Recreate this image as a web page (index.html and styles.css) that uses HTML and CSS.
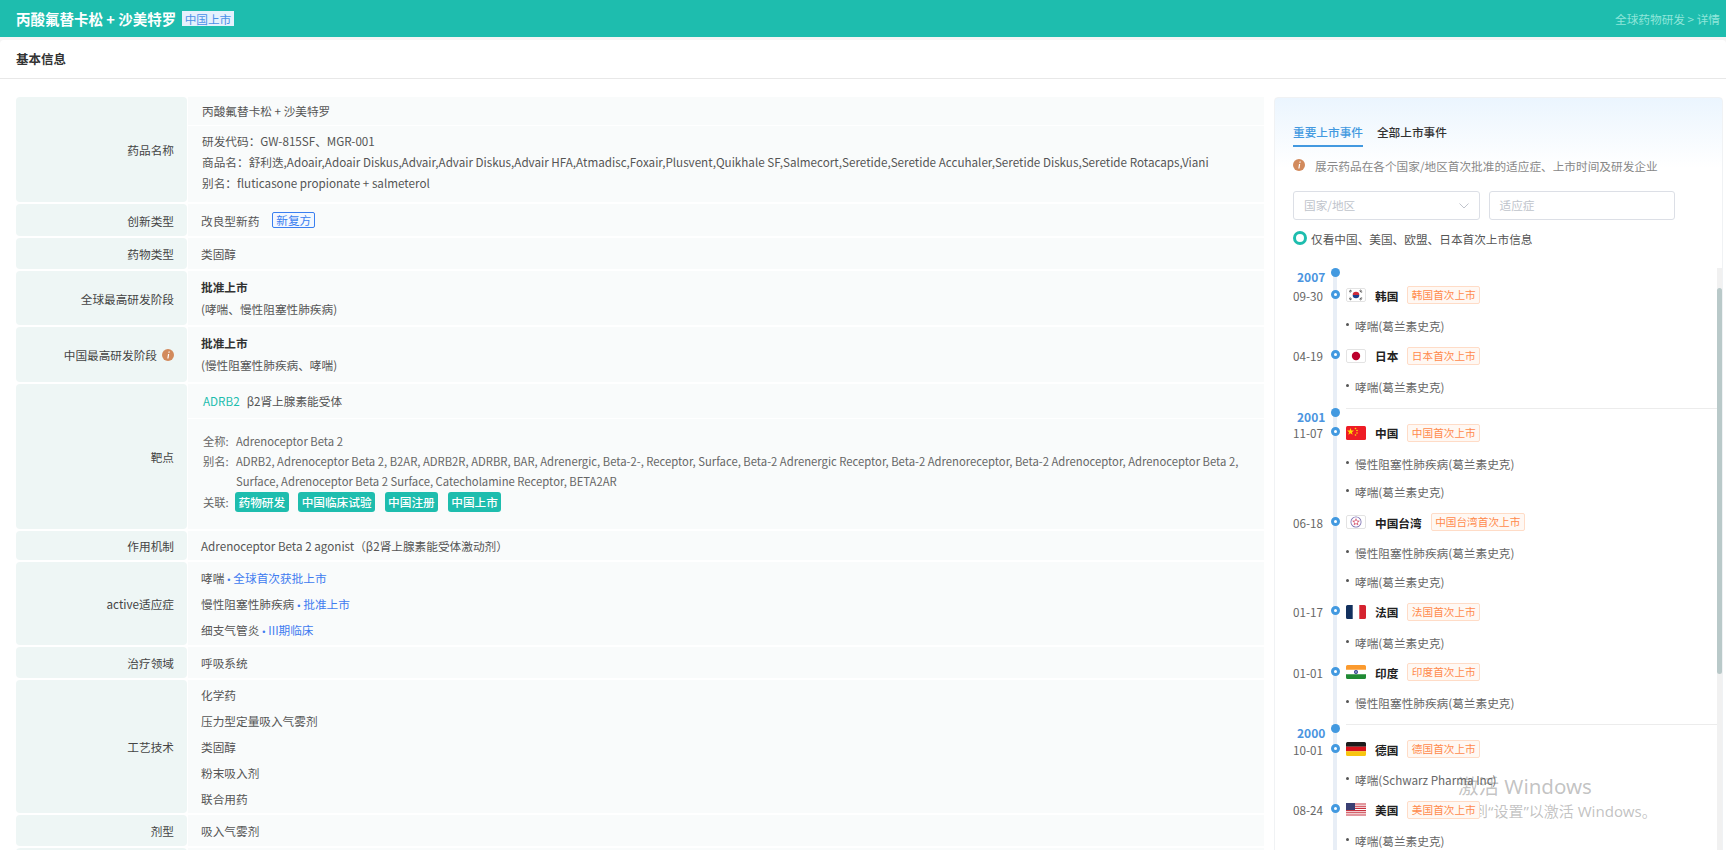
FILE: index.html
```html
<!DOCTYPE html>
<html lang="zh-CN">
<head>
<meta charset="utf-8">
<title>丙酸氟替卡松 + 沙美特罗</title>
<link rel="stylesheet" href="styles.css">
</head>
<body>
<header class="topbar">
  <div class="topbar-left">
    <h1 class="drug-title">丙酸氟替卡松 + 沙美特罗</h1>
    <span class="status-tag">中国上市</span>
  </div>
  <div class="crumb">全球药物研发 &gt; 详情</div>
</header>
<main class="card">
  <div class="card-head">基本信息</div>
  <div class="card-body">
    <section class="info-table">
      <div class="row">
        <div class="label">药品名称</div>
        <div class="value stacked">
          <div class="sub name-main">丙酸氟替卡松 + 沙美特罗</div>
          <div class="sub name-list">
            <div>研发代码：GW-815SF、MGR-001</div>
            <div>商品名：舒利迭,Adoair,Adoair Diskus,Advair,Advair Diskus,Advair HFA,Atmadisc,Foxair,Plusvent,Quikhale SF,Salmecort,Seretide,Seretide Accuhaler,Seretide Diskus,Seretide Rotacaps,Viani</div>
            <div>别名：fluticasone propionate + salmeterol</div>
          </div>
        </div>
      </div>
      <div class="row">
        <div class="label">创新类型</div>
        <div class="value single tagged">改良型新药<span class="outline-tag">新复方</span></div>
      </div>
      <div class="row">
        <div class="label">药物类型</div>
        <div class="value single">类固醇</div>
      </div>
      <div class="row">
        <div class="label">全球最高研发阶段</div>
        <div class="value two-line"><div class="strong">批准上市</div><div>(哮喘、慢性阻塞性肺疾病)</div></div>
      </div>
      <div class="row">
        <div class="label">中国最高研发阶段<svg class="info-icon label-icon" viewBox="0 0 12 12"><circle cx="6" cy="6" r="6" fill="#d28a5c"/><path d="M6.6 2.4h1.2l-.3 1.3H6.300zM6 4.900h1.200L6.500 9.600H5.300z" fill="#fff"/></svg></div>
        <div class="value two-line second"><div class="strong">批准上市</div><div>(慢性阻塞性肺疾病、哮喘)</div></div>
      </div>
      <div class="row">
        <div class="label">靶点</div>
        <div class="value stacked">
          <div class="sub target-main"><span class="target-link">ADRB2</span><span>β2肾上腺素能受体</span></div>
          <div class="sub target-detail">
            <div class="kv"><span class="k">全称:</span><span class="v">Adrenoceptor Beta 2</span></div>
            <div class="kv"><span class="k">别名:</span><span class="v">ADRB2, Adrenoceptor Beta 2, B2AR, ADRB2R, ADRBR, BAR, Adrenergic, Beta-2-, Receptor, Surface, Beta-2 Adrenergic Receptor, Beta-2 Adrenoreceptor, Beta-2 Adrenoceptor, Adrenoceptor Beta 2, Surface, Adrenoceptor Beta 2 Surface, Catecholamine Receptor, BETA2AR</span></div>
            <div class="kv"><span class="k">关联:</span><span class="v chips"><span class="chip">药物研发</span><span class="chip">中国临床试验</span><span class="chip">中国注册</span><span class="chip">中国上市</span></span></div>
          </div>
        </div>
      </div>
      <div class="row">
        <div class="label">作用机制</div>
        <div class="value slim">Adrenoceptor Beta 2 agonist（β2肾上腺素能受体激动剂）</div>
      </div>
      <div class="row">
        <div class="label">active适应症</div>
        <div class="value multi">
          <div>哮喘<span class="sep">•</span><span class="link">全球首次获批上市</span></div>
          <div>慢性阻塞性肺疾病<span class="sep">•</span><span class="link">批准上市</span></div>
          <div>细支气管炎<span class="sep">•</span><span class="link">III期临床</span></div>
        </div>
      </div>
      <div class="row">
        <div class="label">治疗领域</div>
        <div class="value single">呼吸系统</div>
      </div>
      <div class="row">
        <div class="label">工艺技术</div>
        <div class="value multi tight">
          <div>化学药</div>
          <div>压力型定量吸入气雾剂</div>
          <div>类固醇</div>
          <div>粉末吸入剂</div>
          <div>联合用药</div>
        </div>
      </div>
      <div class="row">
        <div class="label">剂型</div>
        <div class="value single">吸入气雾剂</div>
      </div>
      <div class="row">
        <div class="label">&nbsp;</div>
        <div class="value single">&nbsp;</div>
      </div>
    </section>

    <aside class="events">
      <div class="tabs">
        <span class="tab active">重要上市事件</span>
        <span class="tab">全部上市事件</span>
      </div>
      <div class="note"><svg class="info-icon" viewBox="0 0 12 12"><circle cx="6" cy="6" r="6" fill="#d28a5c"/><path d="M6.600 2.400h1.200l-.3 1.300H6.300zM6 4.900h1.200L6.500 9.600H5.300z" fill="#fff"/></svg><span>展示药品在各个国家/地区首次批准的适应症、上市时间及研发企业</span></div>
      <div class="filters">
        <div class="field">国家/地区<svg class="chevron" viewBox="0 0 10 6"><path d="M.5.500 5 5 9.500.500" fill="none" stroke="#c0c4cc" stroke-width="1"/></svg></div>
        <div class="field">适应症</div>
      </div>
      <label class="only"><span class="radio"></span>仅看中国、美国、欧盟、日本首次上市信息</label>

      <div class="timeline">
        <div class="group">
          <div class="year"><span class="year-text">2007</span><span class="year-dot"></span></div>
          <div class="event">
            <span class="date">09-30</span><span class="dot"></span>
            <svg class="flag" viewBox="0 0 20 14"><rect x=".5" y=".5" width="19" height="13" rx="1.500" fill="#fff" stroke="#e3e3e3"/><path d="M6.700 7a3.300 3.300 0 0 1 6.600 0z" fill="#cf2a3a"/><path d="M6.700 7a3.300 3.300 0 0 0 6.600 0z" fill="#1d3f8c"/><path d="M3 3.600l2-1.700M3.800 4.500l2-1.700M14.200 1.900l2 1.700M13.500 2.800l2 1.700M3 10.400l2 1.700M3.800 9.500l2 1.700M14.200 12.100l2-1.700M13.500 11.200l2-1.700" stroke="#222" stroke-width=".8"/></svg>
            <span class="country">韩国</span><span class="first-tag">韩国首次上市</span>
          </div>
          <div class="bullet">哮喘(葛兰素史克)</div>
          <div class="event">
            <span class="date">04-19</span><span class="dot"></span>
            <svg class="flag" viewBox="0 0 20 14"><rect x=".5" y=".5" width="19" height="13" rx="1.500" fill="#fff" stroke="#e3e3e3"/><circle cx="10" cy="7" r="4.200" fill="#bc002d"/></svg>
            <span class="country">日本</span><span class="first-tag">日本首次上市</span>
          </div>
          <div class="bullet">哮喘(葛兰素史克)</div>
        </div>

        <div class="group ruled">
          <div class="year"><span class="year-text">2001</span><span class="year-dot"></span></div>
          <div class="event">
            <span class="date">11-07</span><span class="dot"></span>
            <svg class="flag" viewBox="0 0 20 14"><rect width="20" height="14" rx="1.500" fill="#ee1c25"/><path d="M4.500 2l.9 2.500 2.600.1-2.100 1.600.8 2.500-2.200-1.500-2.200 1.500.8-2.500L1 4.600l2.600-.1z" fill="#ffde00"/><circle cx="9.500" cy="2.500" r=".8" fill="#ffde00"/><circle cx="11" cy="4.500" r=".8" fill="#ffde00"/><circle cx="11" cy="7" r=".8" fill="#ffde00"/><circle cx="9.500" cy="9" r=".8" fill="#ffde00"/></svg>
            <span class="country">中国</span><span class="first-tag">中国首次上市</span>
          </div>
          <div class="bullet">慢性阻塞性肺疾病(葛兰素史克)</div>
          <div class="bullet">哮喘(葛兰素史克)</div>
          <div class="event">
            <span class="date">06-18</span><span class="dot"></span>
            <svg class="flag" viewBox="0 0 20 14"><rect x=".5" y=".5" width="19" height="13" rx="1.500" fill="#fff" stroke="#e3e3e3"/><circle cx="10" cy="7" r="5.500" fill="#7b6fb0"/><circle cx="10" cy="7" r="4.700" fill="#fff"/><path d="M10 2.900l1.200 2.500 2.700.4-2 1.900.5 2.700-2.400-1.300-2.400 1.300.5-2.700-2-1.900 2.700-.4z" fill="#d9607a"/><circle cx="10" cy="7" r="1.600" fill="#fff"/></svg>
            <span class="country">中国台湾</span><span class="first-tag">中国台湾首次上市</span>
          </div>
          <div class="bullet">慢性阻塞性肺疾病(葛兰素史克)</div>
          <div class="bullet">哮喘(葛兰素史克)</div>
          <div class="event">
            <span class="date">01-17</span><span class="dot"></span>
            <svg class="flag" viewBox="0 0 20 14"><rect width="20" height="14" rx="1.500" fill="#fff"/><path d="M1.500 0H6.700v14H1.500A1.500 1.500 0 0 1 0 12.500v-11A1.500 1.500 0 0 1 1.500 0z" fill="#12305e"/><path d="M13.300 0h5.200A1.500 1.500 0 0 1 20 1.500v11a1.500 1.500 0 0 1-1.500 1.500h-5.200z" fill="#d5232f"/></svg>
            <span class="country">法国</span><span class="first-tag">法国首次上市</span>
          </div>
          <div class="bullet">哮喘(葛兰素史克)</div>
          <div class="event">
            <span class="date">01-01</span><span class="dot"></span>
            <svg class="flag" viewBox="0 0 20 14"><rect width="20" height="14" rx="1.500" fill="#fff"/><path d="M0 4.700V1.500A1.500 1.500 0 0 1 1.500 0h17A1.500 1.500 0 0 1 20 1.500v3.200z" fill="#fb9a2e"/><path d="M0 9.300h20v3.200a1.500 1.500 0 0 1-1.500 1.500h-17A1.500 1.500 0 0 1 0 12.500z" fill="#1f8a34"/><circle cx="10" cy="7" r="2" fill="#2a3a8c"/><circle cx="10" cy="7" r=".7" fill="#fff"/></svg>
            <span class="country">印度</span><span class="first-tag">印度首次上市</span>
          </div>
          <div class="bullet">慢性阻塞性肺疾病(葛兰素史克)</div>
        </div>

        <div class="group ruled">
          <div class="year"><span class="year-text">2000</span><span class="year-dot"></span></div>
          <div class="event">
            <span class="date">10-01</span><span class="dot"></span>
            <svg class="flag" viewBox="0 0 20 14"><path d="M0 4.700V1.500A1.500 1.500 0 0 1 1.500 0h17A1.500 1.500 0 0 1 20 1.500v3.200z" fill="#1c1c1c"/><rect y="4.700" width="20" height="4.600" fill="#d8141c"/><path d="M0 9.300h20v3.200a1.500 1.500 0 0 1-1.500 1.500h-17A1.500 1.500 0 0 1 0 12.500z" fill="#f8c50e"/></svg>
            <span class="country">德国</span><span class="first-tag">德国首次上市</span>
          </div>
          <div class="bullet">哮喘(Schwarz Pharma Inc)</div>
          <div class="event">
            <span class="date">08-24</span><span class="dot"></span>
            <svg class="flag" viewBox="0 0 20 14"><rect width="20" height="14" rx="1.500" fill="#fff"/><path d="M0 1h20M0 3.200h20M0 5.400h20M0 7.600h20M0 9.800h20M0 12h20" stroke="#c8313e" stroke-width="1.100"/><rect width="9" height="7" fill="#3a3f73"/></svg>
            <span class="country">美国</span><span class="first-tag">美国首次上市</span>
          </div>
          <div class="bullet">哮喘(葛兰素史克)</div>
        </div>
        <div class="scroll-thumb"></div>
      </div>
    </aside>
  </div>
</main>
<div class="activation">
  <div class="activation-title">激活 Windows</div>
  <div class="activation-sub">转到“设置”以激活 Windows。</div>
</div>
</body>
</html>
```
FILE: styles.css
```css
* { box-sizing: border-box; }
html, body { margin: 0; height: 850px; overflow: hidden; }
body {
  position: relative;
  background: #f5f5f5;
  font-family: "Noto Sans CJK SC", "Noto Sans", sans-serif;
  font-size: 11.67px;
  color: #555;
}
.topbar {
  height: 37px;
  margin-bottom: 3px;
  padding: 0 6px 0 16px;
  background: #1ebdae;
  display: flex;
  align-items: center;
  justify-content: space-between;
}
.topbar-left { display: flex; align-items: center; }
.drug-title { margin: 0; font-size: 14.500px; font-weight: 700; color: #fff; line-height: 20px; }
.status-tag {
  margin-left: 6px;
  padding: 0 2.500px;
  height: 15px;
  line-height: 15px;
  background: #e5f1fd;
  color: #4a90e8;
  font-size: 11.67px;
}
.crumb { color: #8fe6da; font-size: 11.67px; }

.card { background: #fff; border-radius: 4px 4px 0 0; height: 810px; }
.card-head {
  height: 39px;
  padding: 0 16px;
  line-height: 38px;
  font-size: 12.500px;
  font-weight: 700;
  color: #333;
  border-bottom: 1px solid #e8e8e8;
}
.card-body {
  display: flex;
  align-items: flex-start;
  gap: 10px;
  padding: 18px 3px 0 16px;
}

.info-table { width: 1248px; flex: none; display: flex; flex-direction: column; gap: 2px; }
.row { display: flex; }
.label {
  width: 171px;
  flex: none;
  display: flex;
  align-items: center;
  justify-content: flex-end;
  padding-right: 13px;
  background: #eef6f5;
  border-radius: 4px;
  color: #444;
}
.label .label-icon { margin: 0 0 0 5px; }
.value { flex: 1; min-width: 0; margin-left: 0; background: #f9fbfb; border-left: 1px solid #fff; padding-left: 13px; }
.single { height: 31px; line-height: 31px; }
.single.tagged { height: 32px; line-height: 33px; }
.slim { height: 29px; line-height: 30px; }
.two-line { height: 54px; padding-top: 5px; line-height: 22px; }
.two-line.second { height: 55px; padding-top: 5px; line-height: 22px; }
.strong { font-weight: 700; color: #333; }
.multi { padding: 3px 0 2px 13px; line-height: 26px; }
.multi.tight { padding: 2px 0 1px 13px; }
.sep { display: inline-block; width: 9px; line-height: 1; text-align: center; color: #3f7cf0; font-family: "Liberation Sans", sans-serif; font-size: 9px; }
.stacked { padding-left: 0; background: none; display: flex; flex-direction: column; gap: 1px; }
.sub { background: #f9fbfb; padding-left: 14px; }
.name-main { height: 28px; line-height: 28px; }
.name-list { padding-top: 4px; padding-bottom: 9px; line-height: 21px; }
.outline-tag {
  display: inline-block;
  margin-left: 13px;
  padding: 0 3px;
  height: 16px;
  line-height: 14px;
  border: 1px solid #3a7ff0;
  border-radius: 2px;
  background: #f3f8ff;
  color: #3a7ff0;
  vertical-align: 1px;
}
.target-main { height: 34px; line-height: 33px; padding-left: 15px; display: flex; gap: 7px; }
.target-link { color: #1ebdae; }
.target-detail { padding: 12px 14px 17.400px 15px; font-size: 11.270px; line-height: 20.200px; color: #666; }
.kv { display: flex; }
.k { width: 33px; flex: none; }
.v { flex: 1; min-width: 0; }
.chips { display: flex; gap: 9.500px; margin-left: -1px; }
.chip {
  height: 20px;
  padding: 0 3.500px;
  line-height: 20px;
  font-size: 11.670px;
  background: #1ebdae;
  color: #fff;
  border-radius: 3px;
  font-weight: 500;
}
.link { color: #3f7cf0; }

.events {
  width: 449px;
  flex: none;
  height: 775px;
  padding-top: 22px;
  border: 1px solid #f0f2f4;
  border-radius: 4px;
  background: linear-gradient(#ebf5fe 0, #fff 70px);
}
.tabs { display: flex; gap: 14px; padding-left: 18px; }
.tab { height: 27px; line-height: 24px; font-weight: 500; color: #333; }
.tab.active { color: #4299e0; border-bottom: 2px solid #4299e0; }
.note { display: flex; align-items: center; height: 20px; margin-top: 8px; padding-left: 18px; color: #888; }
.info-icon { width: 12px; height: 12px; flex: none; margin-right: 10px; }
.filters { display: flex; gap: 9px; margin-top: 16px; padding-left: 18px; }
.field {
  width: 186.500px;
  height: 29px;
  padding: 0 10px;
  line-height: 26px;
  border: 1px solid #dcdfe6;
  border-radius: 3px;
  background: #fff;
  color: #c0c4cc;
  display: flex;
  justify-content: space-between;
}
.chevron { width: 10px; height: 6px; margin: 11px 0 0; }
.only { display: flex; align-items: center; margin-top: 8px; padding-left: 18px; height: 20px; color: #555; }
.radio { width: 14px; height: 14px; margin-right: 4px; border: 3px solid #1ebdae; border-radius: 50%; background: #fff; }

.timeline {
  position: relative;
  margin-top: 20px;
  height: 590px;
  padding: 0 0 0 18px;
  overflow: hidden;
}
.timeline::before {
  content: "";
  position: absolute;
  left: 58px;
  top: 4px;
  bottom: 0;
  width: 4px;
  background: #e8eef6;
}
.timeline::after {
  content: "";
  position: absolute;
  right: 0;
  top: 0;
  bottom: 0;
  width: 5px;
  background: #f1f1f1;
}
.scroll-thumb {
  position: absolute;
  z-index: 1;
  right: 0;
  top: 20px;
  width: 5px;
  height: 386px;
  border-radius: 3px;
  background: #b9c9c9;
}
.group { position: relative; }
.group.ruled::before {
  content: "";
  position: absolute;
  left: 53px;
  right: 0;
  top: 0;
  height: 1px;
  background: #ececec;
}
.year { position: relative; z-index: 1; display: flex; height: 16px; }
.group:first-child .year { height: 18px; }
.year-text { width: 30px; margin-left: 4px; padding-top: 2px; box-sizing: content-box; height: 14px; line-height: 14px; font-size: 12px; font-weight: 700; color: #4a94e0; }
.year-dot { width: 9px; height: 9px; margin-left: 4px; border-radius: 50%; background: #4299e0; }
.event { position: relative; z-index: 1; display: flex; align-items: center; height: 20px; margin-bottom: 12px; }
.date { width: 38px; flex: none; margin-top: -2px; color: #666; }
.dot { width: 9px; height: 9px; flex: none; margin-top: -4px; border: 3px solid #4299e0; border-radius: 50%; background: #fff; }
.flag { width: 20px; height: 14px; flex: none; margin: -2px 9px 0 6px; }
.country { font-weight: 700; color: #222; margin: -2px 9px 0 0; }
.first-tag {
  height: 18px;
  margin-top: -2px;
  padding: 0 3.500px;
  line-height: 16px;
  font-size: 10.670px;
  border: 1px solid #ffdcc7;
  border-radius: 2px;
  background: #fff8f3;
  color: #ff8a4c;
}
.bullet {
  display: flex;
  align-items: center;
  height: 20px;
  padding-bottom: 5px;
  margin: 0 0 8.750px 53px;
  color: #666;
}
.bullet::before {
  content: "";
  width: 3px;
  height: 3px;
  margin: -2px 6px 0 0;
  border-radius: 50%;
  background: #555;
}
.activation {
  position: absolute;
  left: 1458px;
  top: 772px;
  color: rgba(110, 110, 110, 0.42);
  pointer-events: none;
}
.activation-title { font-size: 20.500px; line-height: 28px; font-family: "Noto Sans", "Noto Sans CJK SC", sans-serif; }
.activation-sub { font-size: 15px; line-height: 20px; margin-top: 1px; font-family: "Noto Sans", "Noto Sans CJK SC", sans-serif; }
```
